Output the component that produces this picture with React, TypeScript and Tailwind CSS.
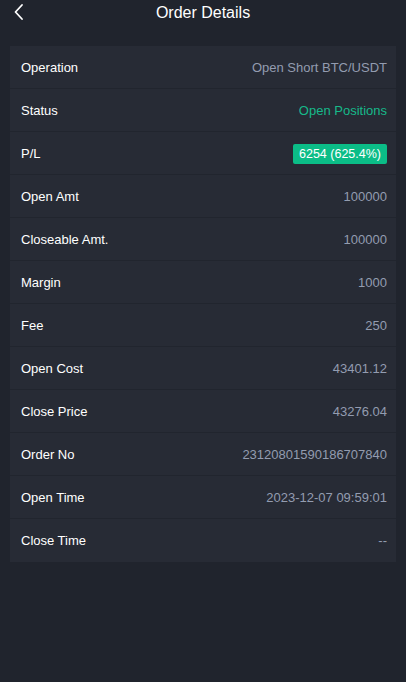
import React from "react";

type Row = { label: string; value: string; kind?: "green" | "badge" };

const rows: Row[] = [
  { label: "Operation", value: "Open Short BTC/USDT" },
  { label: "Status", value: "Open Positions", kind: "green" },
  { label: "P/L", value: "6254 (625.4%)", kind: "badge" },
  { label: "Open Amt", value: "100000" },
  { label: "Closeable Amt.", value: "100000" },
  { label: "Margin", value: "1000" },
  { label: "Fee", value: "250" },
  { label: "Open Cost", value: "43401.12" },
  { label: "Close Price", value: "43276.04" },
  { label: "Order No", value: "23120801590186707840" },
  { label: "Open Time", value: "2023-12-07 09:59:01" },
  { label: "Close Time", value: "--" },
];

export default function App() {
  return (
    <div
      className="min-h-[682px] bg-[#20242d] text-white"
      style={{ fontFamily: '"Liberation Sans", Arial, sans-serif' }}
    >
      {/* Header */}
      <div className="relative flex h-[26px] items-center justify-center">
        <button className="absolute left-[12px] top-[3px] text-white">
          <svg width="14" height="18" viewBox="0 0 14 18" fill="none">
            <path d="M10 2 L3.5 9 L10 16" stroke="currentColor" strokeWidth="1.8" strokeLinecap="round" strokeLinejoin="round" />
          </svg>
        </button>
        <h1 className="text-[16px] leading-none">Order Details</h1>
      </div>

      <div className="px-[10px] pt-[20px]">
        <div className="bg-[#272b35]">
          {rows.map((r, i) => (
            <div
              key={r.label}
              className={`flex h-[43px] items-center justify-between pl-[11px] pr-[9px] pt-[1px] ${
                i < rows.length - 1 ? "border-b border-[#21252e]" : ""
              }`}
            >
              <span className="text-[13px] text-white">{r.label}</span>
              {r.kind === "badge" ? (
                <span className="rounded-[2px] bg-[#0bbd87] px-[6px] py-[3px] text-[12.5px] leading-[14px] text-white">
                  {r.value}
                </span>
              ) : (
                <span className={`text-[13px] ${r.kind === "green" ? "text-[#16b98a]" : "text-[#939cb0]"}`}>
                  {r.value}
                </span>
              )}
            </div>
          ))}
        </div>
      </div>
    </div>
  );
}
